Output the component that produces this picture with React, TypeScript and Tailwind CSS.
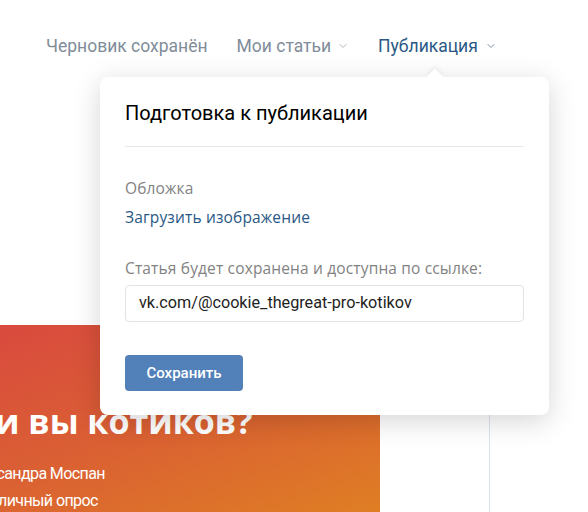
import { ChevronDown } from "lucide-react";

export default function App() {
  return (
    <div className="relative w-[588px] h-[512px] overflow-hidden bg-white font-['Roboto',sans-serif]">
      {/* top nav */}
      <div className="flex items-center h-[90px] pl-[46px] pt-[2px] text-[17.5px]">
        <span className="text-[#818c99]">Черновик сохранён</span>
        <span className="ml-[29px] flex items-center text-[#818c99]">
          Мои статьи
          <ChevronDown className="ml-[6px] w-[12px] h-[12px] text-[#aeb7c2]" strokeWidth={2} />
        </span>
        <span className="ml-[29px] flex items-center text-[#2a5885]">
          Публикация
          <ChevronDown className="ml-[7px] w-[12px] h-[12px] text-[#7a8ea8]" strokeWidth={2} />
        </span>
      </div>

      {/* page behind the popup */}
      <div className="flex h-[422px]">
        <div className="w-[380px] flex flex-col justify-end">
          <div className="h-[187px] overflow-hidden bg-[linear-gradient(160deg,#d94a3e_0%,#da5e34_45%,#df7e24_100%)] text-white">
            <div className="ml-[-27px] mt-[79px] whitespace-nowrap text-[34px] font-bold leading-none font-['Open_Sans',sans-serif]">
              ли вы котиков?
            </div>
            <div className="ml-[-38px] mt-[22px] whitespace-nowrap text-[16px] tracking-[-0.6px] leading-[27px]">
              Александра Моспан
            </div>
            <div className="ml-[-28px] whitespace-nowrap text-[16px] tracking-[-0.6px] leading-[27px]">
              Публичный опрос
            </div>
          </div>
        </div>
        <div className="ml-[109px] w-px bg-[#dce3ea]" />
      </div>

      {/* popup */}
      <div className="absolute left-[100px] top-[77px] w-[449px] h-[338px] rounded-[8px] bg-white shadow-[0_6px_28px_rgba(0,0,0,0.17)]">
        <div className="absolute left-[329px] top-[-6px] w-[12px] h-[12px] rotate-45 bg-white shadow-[-2px_-2px_4px_rgba(0,0,0,0.05)]" />
        <div className="relative px-[25px]">
          <div className="pt-[24px] pb-[21px] text-[20px] leading-[24px] text-[#000]">
            Подготовка к публикации
          </div>
          <div className="h-px bg-[#e7e8ec]" />
          <div className="font-['Open_Sans',sans-serif] text-[15.5px] tracking-[0.15px] leading-[19px]">
            <div className="mt-[32px] text-[#828282]">Обложка</div>
            <div className="mt-[10px] text-[#2a5885]">Загрузить изображение</div>
            <div className="mt-[32px] text-[#828282]">
              Статья будет сохранена и доступна по ссылке:
            </div>
          </div>
          <div className="mt-[7px] h-[37px] flex items-center px-[13px] rounded-[4px] border border-[#e1e3e6] text-[16.2px] text-[#222]">
            vk.com/@cookie_thegreat-pro-kotikov
          </div>
          <button className="mt-[33px] h-[36px] w-[118px] rounded-[4px] bg-[#5181b8] text-white text-[15px] font-medium">
            Сохранить
          </button>
        </div>
      </div>
    </div>
  );
}
